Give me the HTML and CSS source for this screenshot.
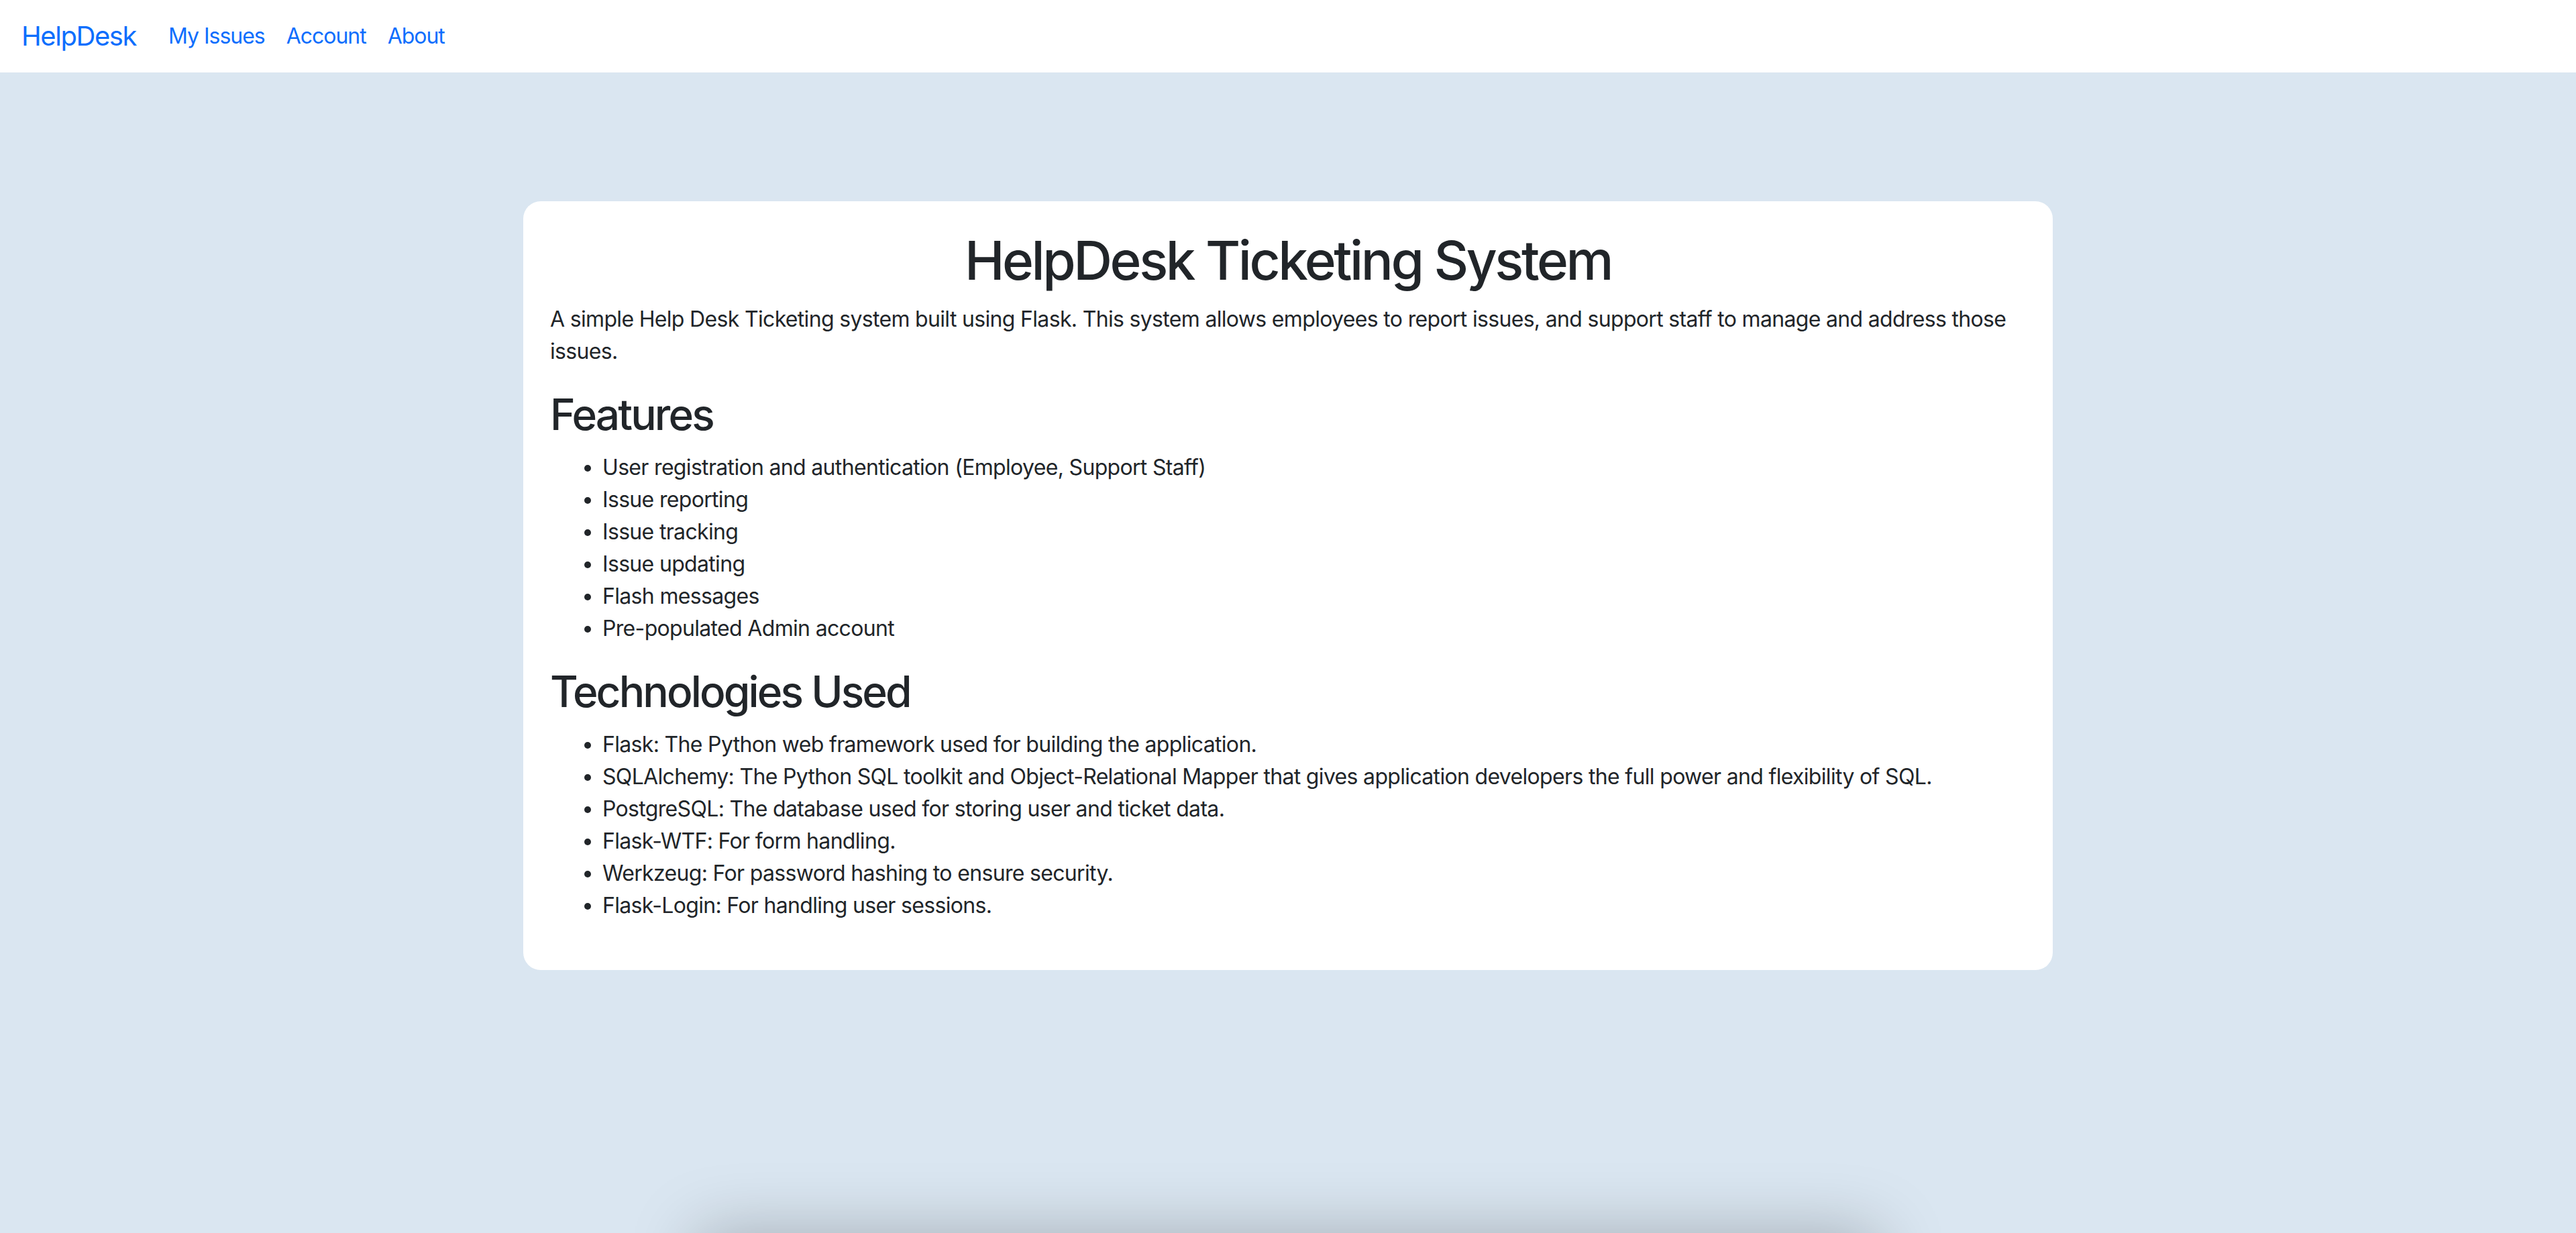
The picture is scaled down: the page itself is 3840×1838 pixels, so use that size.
FILE: index.html
```html
<!DOCTYPE html>
<html lang="en">
<head>
<meta charset="utf-8">
<title>About - HelpDesk</title>
<link rel="stylesheet" href="styles.css">
</head>
<body>
<div class="page">
  <nav class="navbar">
    <a class="brand" href="#">HelpDesk</a>
    <ul class="nav">
      <li><a class="nav-link" href="#">My Issues</a></li>
      <li><a class="nav-link" href="#">Account</a></li>
      <li><a class="nav-link" href="#">About</a></li>
    </ul>
  </nav>
  <main class="main">
    <section class="card">
      <h1 class="title">HelpDesk Ticketing System</h1>
      <p class="lead-text">A simple Help Desk Ticketing system built using Flask. This system allows employees to report issues, and support staff to manage and address those issues.</p>
      <h2 class="section-title">Features</h2>
      <ul class="list">
        <li>User registration and authentication (Employee, Support Staff)</li>
        <li>Issue reporting</li>
        <li>Issue tracking</li>
        <li>Issue updating</li>
        <li>Flash messages</li>
        <li>Pre-populated Admin account</li>
      </ul>
      <h2 class="section-title">Technologies Used</h2>
      <ul class="list">
        <li>Flask: The Python web framework used for building the application.</li>
        <li>SQLAlchemy: The Python SQL toolkit and Object-Relational Mapper that gives application developers the full power and flexibility of SQL.</li>
        <li>PostgreSQL: The database used for storing user and ticket data.</li>
        <li>Flask-WTF: For form handling.</li>
        <li>Werkzeug: For password hashing to ensure security.</li>
        <li>Flask-Login: For handling user sessions.</li>
      </ul>
    </section>
  </main>
</div>
<footer class="footer"></footer>
</body>
</html>
```

FILE: styles.css
```css
html {
  scrollbar-width: none;
}
html::-webkit-scrollbar {
  display: none;
}
body {
  margin: 0;
  background: #dae6f1;
  color: #212529;
  font-family: Inter, "Noto Sans", sans-serif;
  font-size: 32px;
  line-height: 1.5;
  letter-spacing: -0.021em;
}
.page {
  min-height: 1838px;
}
.navbar {
  height: 108px;
  background: #ffffff;
  display: flex;
  align-items: center;
  padding: 0 24px;
  box-sizing: border-box;
}
.brand {
  font-size: 40px;
  color: #0d6efd;
  text-decoration: none;
  margin-right: 32px;
  padding-left: 8px;
  letter-spacing: -0.036em;
}
.nav {
  display: flex;
  list-style: none;
  margin: 0;
  padding: 0;
}
.nav-link {
  display: block;
  padding: 0 16px;
  color: #0d6efd;
  text-decoration: none;
  letter-spacing: -0.032em;
}
.main {
  padding-top: 192px;
}
.card {
  width: 2280px;
  margin: 0 auto;
  background: #ffffff;
  border-radius: 26px;
  padding: 40px;
  box-sizing: border-box;
}
.title {
  font-size: 80px;
  font-weight: 500;
  line-height: 1.2;
  margin: 0 0 16px;
  text-align: center;
  letter-spacing: -0.043em;
}
.lead-text {
  margin: 0 0 32px;
}
.section-title {
  font-size: 64px;
  font-weight: 500;
  line-height: 1.2;
  margin: 0 0 16px;
  letter-spacing: -0.045em;
}
.list {
  margin: 0 0 32px;
  padding-left: 78px;
}
.footer {
  width: 1760px;
  height: 200px;
  margin: 0 auto;
  background: #dae6f1;
  box-shadow: 0 0 100px rgba(0, 0, 0, 0.25);
}
```
